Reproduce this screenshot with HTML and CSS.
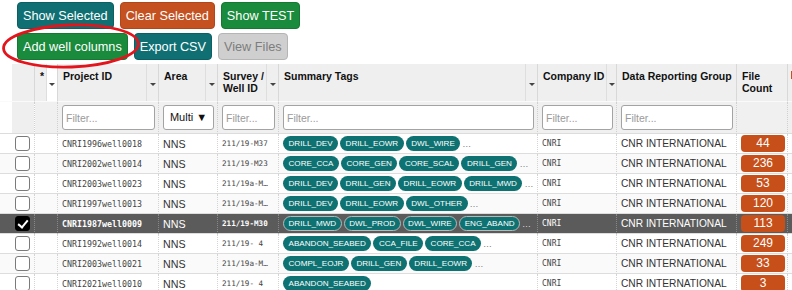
FILE: index.html
```html
<!DOCTYPE html>
<html lang="en">
<head>
    <meta charset="UTF-8">
    <title>Well Data Browser</title>
    <link rel="stylesheet" href="styles.css">
</head>
<body>
    <div class="page">
        <div class="toolbar">
            <div class="btn-row">
                <button class="btn btn-teal">Show Selected</button>
                <button class="btn btn-orange">Clear Selected</button>
                <button class="btn btn-green">Show TEST</button>
            </div>
            <div class="btn-row">
                <button class="btn btn-green">Add well columns</button>
                <button class="btn btn-teal">Export CSV</button>
                <button class="btn btn-disabled">View Files</button>
            </div>
        </div>

        <!-- annotation drawn over the screenshot -->
        <svg class="highlight" width="150" height="75" viewBox="0 0 150 75">
            <ellipse cx="71" cy="46" rx="67.5" ry="21" transform="rotate(-2 71 46)" fill="none" stroke="#e3141c" stroke-width="2.8"/>
        </svg>

        <table class="grid">
            <thead>
                <tr class="head-row">
                    <th class="c-sel"></th>
                    <th class="c-star"><div class="th-inner"><span class="th-label">*</span><span class="th-menu menu-light"><i class="caret"></i></span></div></th>
                    <th class="c-pid"><div class="th-inner"><span class="th-label">Project ID</span><span class="th-menu"><i class="caret"></i></span></div></th>
                    <th class="c-area"><div class="th-inner"><span class="th-label">Area</span><span class="th-menu"><i class="caret"></i></span></div></th>
                    <th class="c-survey"><div class="th-inner"><span class="th-label">Survey /<br>Well ID</span><span class="th-menu"><i class="caret"></i></span></div></th>
                    <th class="c-tags"><div class="th-inner"><span class="th-label">Summary Tags</span><span class="th-menu"><i class="caret"></i></span></div></th>
                    <th class="c-comp"><div class="th-inner"><span class="th-label">Company ID</span><span class="th-menu"><i class="caret"></i></span></div></th>
                    <th class="c-drg"><div class="th-inner"><span class="th-label">Data Reporting Group</span></div></th>
                    <th class="c-count"><div class="th-inner"><span class="th-label">File<br>Count</span></div></th>
                    <th class="c-files"><div class="th-inner"><span class="th-label"><i class="files-mark"></i></span></div></th>
                </tr>
                <tr class="filter-row">
                    <td class="c-sel"></td>
                    <td></td>
                    <td><input class="filter" type="text" placeholder="Filter..."></td>
                    <td><div class="multi">Multi ▼</div></td>
                    <td><input class="filter" type="text" placeholder="Filter..."></td>
                    <td><input class="filter" type="text" placeholder="Filter..."></td>
                    <td><input class="filter" type="text" placeholder="Filter..."></td>
                    <td><input class="filter" type="text" placeholder="Filter..."></td>
                    <td></td>
                    <td></td>
                </tr>
            </thead>
            <tbody>
                <tr>
                    <td class="c-sel"><span class="check"></span></td>
                    <td></td>
                    <td class="mono">CNRI1996well0018</td>
                    <td class="area">NNS</td>
                    <td class="mono survey">211/19-M37</td>
                    <td class="tags"><span class="tag">DRILL_DEV</span><span class="tag">DRILL_EOWR</span><span class="tag">DWL_WIRE</span><span class="more">…</span></td>
                    <td class="mono comp">CNRI</td>
                    <td class="group">CNR INTERNATIONAL</td>
                    <td><span class="badge">44</span></td>
                    <td><span class="badge"></span></td>
                </tr>
                <tr class="alt">
                    <td class="c-sel"><span class="check"></span></td>
                    <td></td>
                    <td class="mono">CNRI2002well0014</td>
                    <td class="area">NNS</td>
                    <td class="mono survey">211/19-M23</td>
                    <td class="tags"><span class="tag">CORE_CCA</span><span class="tag">CORE_GEN</span><span class="tag">CORE_SCAL</span><span class="tag">DRILL_GEN</span><span class="more">…</span></td>
                    <td class="mono comp">CNRI</td>
                    <td class="group">CNR INTERNATIONAL</td>
                    <td><span class="badge">236</span></td>
                    <td><span class="badge"></span></td>
                </tr>
                <tr>
                    <td class="c-sel"><span class="check"></span></td>
                    <td></td>
                    <td class="mono">CNRI2003well0023</td>
                    <td class="area">NNS</td>
                    <td class="mono survey" title="211/19a-M27Z">211/19a-M…</td>
                    <td class="tags"><span class="tag">DRILL_DEV</span><span class="tag">DRILL_GEN</span><span class="tag">DRILL_EOWR</span><span class="tag">DRILL_MWD</span><span class="more">…</span></td>
                    <td class="mono comp">CNRI</td>
                    <td class="group">CNR INTERNATIONAL</td>
                    <td><span class="badge">53</span></td>
                    <td><span class="badge"></span></td>
                </tr>
                <tr class="alt">
                    <td class="c-sel"><span class="check"></span></td>
                    <td></td>
                    <td class="mono">CNRI1997well0013</td>
                    <td class="area">NNS</td>
                    <td class="mono survey" title="211/19a-M24Y">211/19a-M…</td>
                    <td class="tags"><span class="tag">DRILL_DEV</span><span class="tag">DRILL_EOWR</span><span class="tag">DWL_OTHER</span><span class="more">…</span></td>
                    <td class="mono comp">CNRI</td>
                    <td class="group">CNR INTERNATIONAL</td>
                    <td><span class="badge">120</span></td>
                    <td><span class="badge"></span></td>
                </tr>
                <tr class="selected">
                    <td class="c-sel"><span class="check checked"></span></td>
                    <td></td>
                    <td class="mono strong">CNRI1987well0009</td>
                    <td class="area">NNS</td>
                    <td class="mono survey strong">211/19-M30</td>
                    <td class="tags"><span class="tag">DRILL_MWD</span><span class="tag">DWL_PROD</span><span class="tag">DWL_WIRE</span><span class="tag">ENG_ABAND</span><span class="more">…</span></td>
                    <td class="mono comp">CNRI</td>
                    <td class="group">CNR INTERNATIONAL</td>
                    <td><span class="badge">113</span></td>
                    <td><span class="badge"></span></td>
                </tr>
                <tr>
                    <td class="c-sel"><span class="check"></span></td>
                    <td></td>
                    <td class="mono">CNRI1992well0014</td>
                    <td class="area">NNS</td>
                    <td class="mono survey">211/19- 4</td>
                    <td class="tags"><span class="tag">ABANDON_SEABED</span><span class="tag">CCA_FILE</span><span class="tag">CORE_CCA</span><span class="more">…</span></td>
                    <td class="mono comp">CNRI</td>
                    <td class="group">CNR INTERNATIONAL</td>
                    <td><span class="badge">249</span></td>
                    <td><span class="badge"></span></td>
                </tr>
                <tr class="alt">
                    <td class="c-sel"><span class="check"></span></td>
                    <td></td>
                    <td class="mono">CNRI2003well0021</td>
                    <td class="area">NNS</td>
                    <td class="mono survey" title="211/19a-M21X">211/19a-M…</td>
                    <td class="tags"><span class="tag">COMPL_EOJR</span><span class="tag">DRILL_GEN</span><span class="tag">DRILL_EOWR</span><span class="more">…</span></td>
                    <td class="mono comp">CNRI</td>
                    <td class="group">CNR INTERNATIONAL</td>
                    <td><span class="badge">33</span></td>
                    <td><span class="badge"></span></td>
                </tr>
                <tr>
                    <td class="c-sel"><span class="check"></span></td>
                    <td></td>
                    <td class="mono">CNRI2021well0010</td>
                    <td class="area">NNS</td>
                    <td class="mono survey">211/19- 4</td>
                    <td class="tags"><span class="tag">ABANDON_SEABED</span></td>
                    <td class="mono comp">CNRI</td>
                    <td class="group">CNR INTERNATIONAL</td>
                    <td><span class="badge">3</span></td>
                    <td><span class="badge"></span></td>
                </tr>
            </tbody>
        </table>
    </div>
</body>
</html>
```

FILE: styles.css
```css
html, body {
    margin: 0;
    padding: 0;
    background: #fff;
    overflow: hidden;
}

body {
    font-family: "Liberation Sans", Arial, sans-serif;
    color: #333;
}

.page {
    position: relative;
    width: 792px;
    height: 290px;
    overflow: hidden;
}

/* ---- toolbar buttons ---- */
.toolbar {
    padding: 2px 0 0 17px;
}

.btn-row {
    display: flex;
    gap: 6px;
    margin-bottom: 4px;
}

.btn {
    height: 27px;
    padding: 0 5px;
    border: 1px solid transparent;
    border-radius: 4px;
    font-family: "Liberation Sans", Arial, sans-serif;
    font-size: 12.7px;
    color: #fff;
    cursor: pointer;
}

.btn-teal {
    background-color: #0f6f73;
    border-color: #0c6064;
}

.btn-orange {
    background-color: #c4511f;
    border-color: #b0461a;
}

.btn-green {
    background-color: #1a8a3c;
    border-color: #157833;
}

.btn-disabled {
    background-color: #cfcfcf;
    border-color: #b5b5b5;
    color: #7d7d7d;
}

/* red circle someone drew on the screenshot */
.highlight {
    position: absolute;
    left: 0;
    top: 0;
    z-index: 5;
    pointer-events: none;
}

/* ---- grid ---- */
.grid {
    margin-top: 1px;
    border-collapse: separate;
    border-spacing: 0;
    table-layout: fixed;
    width: 848px;
}

.grid th,
.grid td {
    box-sizing: border-box;
    padding: 0 3px 0 4px;
    white-space: nowrap;
    overflow: hidden;
    vertical-align: middle;
    text-align: left;
}

.c-sel { width: 35px; }
.c-star { width: 23px; }
.c-pid { width: 101px; }
.c-area { width: 59px; }
.c-survey { width: 61px; }
.c-tags { width: 259px; }
.c-comp { width: 79px; }
.c-drg { width: 120px; }
.c-count { width: 51px; }
.c-files { width: 60px; }

.head-row {
    height: 38px;
}

.head-row th {
    padding: 0;
    vertical-align: top;
    background-color: #efefef;
    border-right: 1px solid #d8d8d8;
    border-bottom: 1px solid #fafafa;
    font-size: 10.5px;
    font-weight: bold;
    color: #111;
}

.head-row th.c-sel,
.filter-row td.c-sel {
    background: linear-gradient(to right, #fff 12px, #efefef 12px);
}

.th-inner {
    display: flex;
    height: 37px;
}

.th-label {
    flex: 1;
    padding: 6px 2px 0 5px;
    line-height: 12px;
    white-space: nowrap;
}

.files-mark {
    display: block;
    margin: 1px 0 0 -2px;
    width: 30px;
    height: 8px;
    border-left: 2px solid #c4511f;
}

.th-menu {
    width: 11px;
    border-left: 1px solid #dedede;
    display: flex;
    align-items: center;
    justify-content: center;
}

.menu-light {
    background-color: #fff;
}

.caret {
    display: block;
    margin-top: 4px;
    width: 0;
    height: 0;
    border-left: 3px solid transparent;
    border-right: 3px solid transparent;
    border-top: 3px solid #444;
}

.filter-row {
    height: 32px;
}

.filter-row td {
    background-color: #f0f0f0;
    border-right: 1px dotted #d0d0d0;
    border-bottom: 1px solid #dcdcdc;
}

.filter {
    box-sizing: border-box;
    display: block;
    width: 100%;
    height: 25px;
    margin: 0;
    padding: 0 3px;
    border: 1px solid #a3a3a3;
    border-radius: 3px;
    background: #fff;
    font-family: "Liberation Sans", Arial, sans-serif;
    font-size: 10.5px;
    color: #333;
}

.filter::placeholder {
    color: #9a9a9a;
}

.multi {
    box-sizing: border-box;
    height: 25px;
    line-height: 23px;
    border: 1px solid #a3a3a3;
    border-radius: 3px;
    background: #fff;
    text-align: center;
    font-size: 11px;
    color: #111;
}

/* ---- data rows ---- */
tbody tr {
    height: 20px;
}

tbody td {
    border-right: 1px dotted #d4d4d4;
    border-bottom: 1px solid #dddddd;
    font-size: 10.7px;
    color: #333;
}

tbody tr.alt td {
    background-color: #fafafa;
}

tbody td.c-sel {
    padding-left: 15px;
}

.check {
    display: block;
    box-sizing: border-box;
    width: 15px;
    height: 15px;
    border: 1px solid #7a7a7a;
    border-radius: 3px;
    background: #fff;
    position: relative;
}

.check.checked {
    background: #000;
    border-color: #000;
}

.check.checked::after {
    content: "";
    position: absolute;
    left: 4px;
    top: 1px;
    width: 4px;
    height: 8px;
    border: solid #fff;
    border-width: 0 2px 2px 0;
    transform: rotate(40deg);
}

.mono {
    font-family: "DejaVu Sans Mono", "Liberation Mono", monospace;
    font-size: 8.3px;
    color: #444;
    padding-left: 5px;
}

.survey {
    font-size: 7.6px;
    padding-right: 2px;
}

.comp {
    font-size: 8px;
}

.area {
    padding-left: 4px;
}

.group {
    padding-left: 5px;
    font-size: 10.2px;
}

.tags {
    font-size: 0;
    padding-left: 5px;
}

.tag {
    display: inline-block;
    box-sizing: border-box;
    height: 15px;
    line-height: 15px;
    padding: 0 5.5px;
    margin-right: 2px;
    border-radius: 8px;
    background-color: #0f7272;
    color: #fff;
    font-size: 8.1px;
    vertical-align: middle;
}

.more {
    display: inline-block;
    font-size: 9px;
    color: #777;
    vertical-align: middle;
}

.badge {
    display: block;
    width: 44px;
    height: 17px;
    line-height: 17px;
    border-radius: 4px;
    background-color: #c64f1a;
    color: #fff;
    text-align: center;
    font-size: 12px;
}

tbody tr.selected td {
    background-color: #5b5b5b;
    color: #fff;
    border-right-color: #888;
}

tbody tr.selected .mono {
    color: #fff;
}

tbody tr.selected .strong {
    font-weight: bold;
}

tbody tr.selected .tag {
    line-height: 13px;
    padding: 0 4.5px;
    border: 1px solid #b8b8b8;
}

tbody tr.selected .more {
    color: #ddd;
}
```
